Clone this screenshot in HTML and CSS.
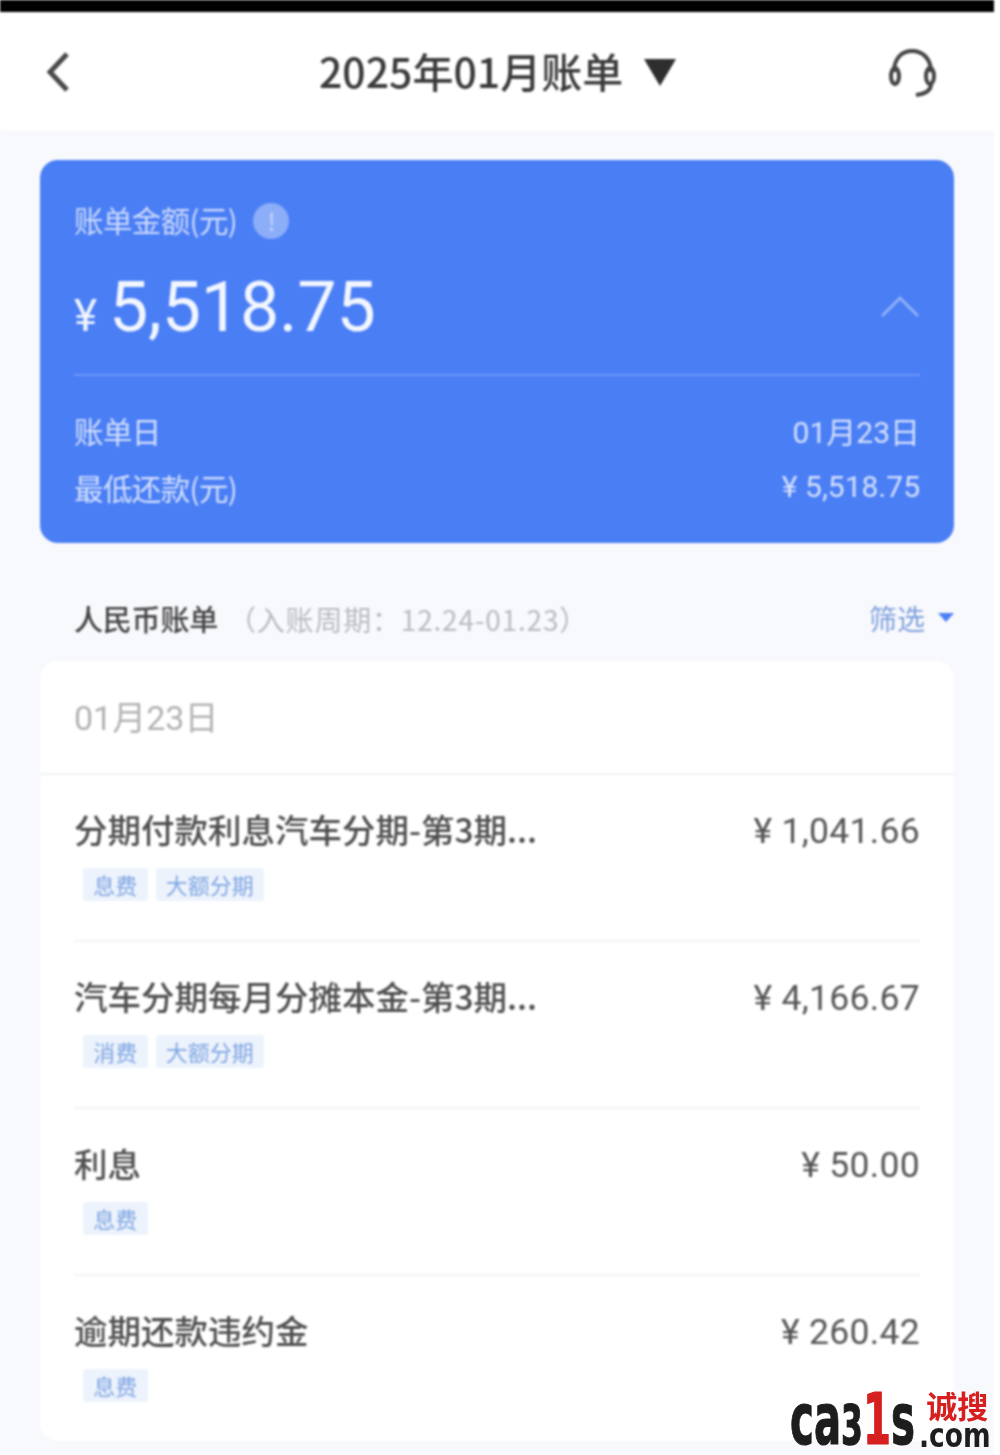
FILE: index.html
```html
<!DOCTYPE html>
<html lang="zh-CN">
<head>
<meta charset="utf-8">
<title>2025年01月账单</title>
<link rel="stylesheet" href="styles.css">
</head>
<body>
<div class="screen">
  <div class="statusbar"></div>
  <header class="nav">
    <svg class="nav-back" width="28" height="44" viewBox="0 0 28 44"><path d="M23 4 L6 22 L23 40" fill="none" stroke="#4a4a4a" stroke-width="5"/></svg>
    <div class="nav-title">2025年01月账单<svg class="nav-caret" width="32" height="27" viewBox="0 0 32 27"><path d="M0 0 H32 L16 27 Z" fill="#2e2e2e"/></svg></div>
    <svg class="nav-service" width="50" height="50" viewBox="0 0 50 50" fill="none" stroke="#444" stroke-width="4"><path d="M6 24 C6 10 14 3 24 3 C34 3 43 10 43 24"/><ellipse cx="7" cy="28" rx="4" ry="8"/><ellipse cx="42" cy="28" rx="4" ry="8"/><path d="M43 36 C43 43 36 46 28 47"/></svg>
  </header>

  <main class="content">
    <section class="summary">
      <div class="summary-label">账单金额(元)<span class="info">!</span></div>
      <div class="summary-amount">
        <div class="amount"><span class="amount-yen">¥</span>5,518.75</div>
        <svg width="40" height="24" viewBox="0 0 40 24"><path d="M2 22 L20 4 L38 22" fill="none" stroke="#8fb0f7" stroke-width="3"/></svg>
      </div>
      <div class="summary-row first"><span>账单日</span><span>01月23日</span></div>
      <div class="summary-row"><span>最低还款(元)</span><span>¥ 5,518.75</span></div>
    </section>

    <div class="section-head">
      <div><span class="section-title">人民币账单</span><span class="section-period">（入账周期：12.24-01.23）</span></div>
      <div class="filter">筛选<svg width="16" height="11" viewBox="0 0 16 11"><path d="M0 1 H16 L8 10 Z" fill="#4a7ef5"/></svg></div>
    </div>

    <section class="bill">
      <div class="bill-date">01月23日</div>
      <div class="items">
        <article class="item">
          <div class="item-top"><span class="item-name">分期付款利息汽车分期-第3期...</span><span class="item-value">¥ 1,041.66</span></div>
          <div class="tags"><span class="tag">息费</span><span class="tag">大额分期</span></div>
        </article>
        <article class="item">
          <div class="item-top"><span class="item-name">汽车分期每月分摊本金-第3期...</span><span class="item-value">¥ 4,166.67</span></div>
          <div class="tags"><span class="tag">消费</span><span class="tag">大额分期</span></div>
        </article>
        <article class="item">
          <div class="item-top"><span class="item-name">利息</span><span class="item-value">¥ 50.00</span></div>
          <div class="tags"><span class="tag">息费</span></div>
        </article>
        <article class="item">
          <div class="item-top"><span class="item-name">逾期还款违约金</span><span class="item-value">¥ 260.42</span></div>
          <div class="tags"><span class="tag">息费</span></div>
        </article>
      </div>
    </section>
  </main>
</div>

<div class="watermark">
  <span class="wm-main">ca<span class="wm-three">3</span><span class="wm-one">1</span>s</span>
  <div class="wm-side"><span class="wm-cn">诚搜</span><span class="wm-com">.com</span></div>
</div>
</body>
</html>
```
FILE: styles.css
```css
* { box-sizing: border-box; }
html, body { margin: 0; padding: 0; background: #fff; }
body {
  width: 1000px;
  height: 1455px;
  overflow: hidden;
  position: relative;
  font-family: "Noto Sans CJK SC", "Noto Sans", sans-serif;
}
.screen {
  width: 994px;
  height: 1455px;
  background: #f8f9fd;
  overflow: hidden;
  filter: blur(1px);
}
.statusbar { height: 12px; background: #000; }
.nav {
  height: 121px;
  background: #fff;
  border-bottom: 2px solid #f6f6f8;
  display: flex;
  align-items: center;
  justify-content: space-between;
  padding: 0 56px 0 44px;
  position: relative;
}
.nav-back { margin-top: 1px; width: 28px; height: 44px; }
.nav-title {
  position: absolute;
  left: 319px;
  top: 29px;
  display: flex;
  align-items: center;
  gap: 21px;
  font-size: 41px;
  line-height: 58px;
  color: #3a3a3a;
  white-space: nowrap;
  font-weight: 500;
}
.nav-caret { margin-top: 4px; }
.nav-service { margin-top: 2px; width: 50px; height: 50px; }
.content { padding: 27px 40px 0; }
.summary {
  height: 383px;
  background: #4a7ef5;
  border-radius: 18px;
  padding: 38px 34px 0;
  color: #fff;
}
.summary-label {
  display: flex;
  align-items: center;
  gap: 16px;
  height: 42px;
  font-size: 29.5px;
  letter-spacing: -0.6px;
  color: #cfdcfb;
}
.info {
  width: 36px;
  height: 36px;
  margin-top: 4px;
  border-radius: 50%;
  background: #8cadf8;
  color: #c8d8fc;
  font-size: 24px;
  line-height: 36px;
  text-align: center;
}
.summary-amount {
  display: flex;
  justify-content: space-between;
  align-items: center;
  margin-top: 6px;
  border-bottom: 2px solid #6d96f6;
  height: 130px;
}
.summary-amount svg { margin-top: -8px; }
.amount {
  font-family: Roboto, sans-serif;
  font-size: 70px;
  line-height: 90px;
  margin-top: 2px;
  color: #f2f6ff;
  letter-spacing: -0.2px;
}
.amount-yen { font-size: 44px; margin-right: 12px; }
.summary-row {
  display: flex;
  justify-content: space-between;
  align-items: center;
  height: 57px;
  font-size: 29.5px;
  letter-spacing: -0.6px;
  color: #d5e1fc;
}
.summary-row span:last-child { font-family: Roboto, "Noto Sans CJK SC", sans-serif; font-size: 30px; letter-spacing: 0; }
.summary-row.first { margin-top: 25px; }
.section-head {
  display: flex;
  justify-content: space-between;
  align-items: center;
  height: 118px;
  padding: 31px 0 0 34px;
}
.section-title { font-size: 29px; color: #444; font-weight: 500; letter-spacing: -0.2px; }
.section-period { font-size: 28px; color: #b8bbc2; margin-left: 10px; letter-spacing: 0.8px; }
.filter {
  display: flex;
  align-items: center;
  gap: 13px;
  font-size: 28px;
  color: #7d9fdb;
}
.bill {
  background: #fff;
  border-radius: 18px;
  height: 780px;
}
.bill-date {
  height: 114px;
  padding: 0 34px 4px;
  display: flex;
  align-items: center;
  font-size: 34px;
  color: #b2b2b2;
  border-bottom: 2px solid #f1f3f5;
  font-family: Roboto, "Noto Sans CJK SC", sans-serif;
}
.items { padding: 0 34px; }
.item {
  height: 167px;
  padding-top: 28px;
  border-bottom: 2px solid #f2f3f6;
}
.item:last-child { border-bottom: 0; }
.item-top {
  display: flex;
  justify-content: space-between;
  align-items: center;
  height: 50px;
}
.item-name { font-size: 33.5px; color: #4f4f4f; font-weight: 500; white-space: nowrap; }
.item-value {
  font-family: Roboto, sans-serif;
  font-size: 35.5px;
  margin-top: 6px;
  color: #555;
  letter-spacing: 0.3px;
}
.tags { display: flex; gap: 8px; margin: 15px 0 0 9px; }
.tag {
  height: 33px;
  padding: 0 10.25px;
  background: #edf3fc;
  color: #7fa5e2;
  font-size: 22px;
  line-height: 33px;
  border-radius: 3px;
}
.watermark {
  position: absolute;
  left: 790px;
  top: 1377px;
  display: flex;
  align-items: flex-start;
  filter: blur(0.4px);
}
.wm-main {
  display: block;
  width: max-content;
  margin-right: -94px;
  font-family: "DejaVu Sans", sans-serif;
  font-weight: 700;
  font-size: 72px;
  line-height: 84px;
  color: #1d1d1d;
  -webkit-text-stroke: 1.2px #1d1d1d;
  white-space: nowrap;
  transform: scaleX(0.56);
  transform-origin: left top;
}
.wm-three { font-size: 56px; }
.wm-one { color: #d62020; -webkit-text-stroke-color: #d62020; }
.wm-side { display: flex; flex-direction: column; padding-top: 11px; }
.wm-cn {
  font-weight: 700;
  font-size: 31px;
  line-height: 34px;
  padding-left: 7px;
  color: #d62020;
}
.wm-com {
  display: block;
  width: max-content;
  margin-right: -22px;
  font-family: "DejaVu Sans", sans-serif;
  font-weight: 700;
  font-size: 34px;
  line-height: 26px;
  color: #1d1d1d;
  white-space: nowrap;
  transform: scaleX(0.78);
  transform-origin: left top;
}
```
